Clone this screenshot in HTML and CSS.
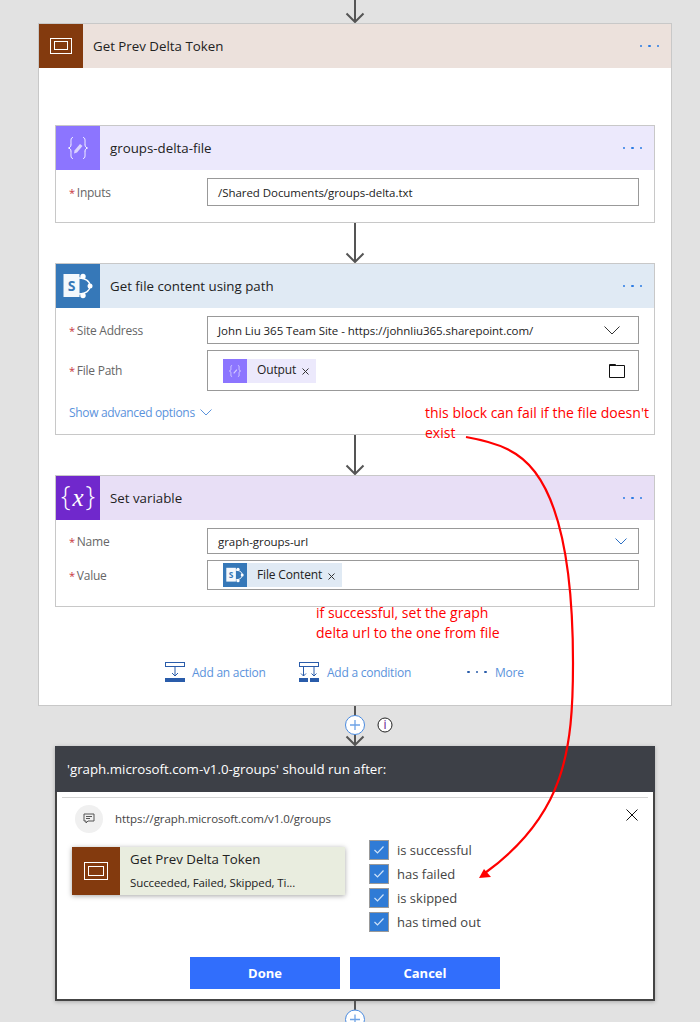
FILE: index.html
```html
<!DOCTYPE html>
<html lang="en">
<head>
<meta charset="utf-8">
<title>Get Prev Delta Token</title>
<link rel="stylesheet" href="styles.css">
</head>
<body>
<div class="page">
  <svg class="conn conn-top" width="24" height="23" viewBox="0 0 24 23"><path d="M12 0V21" class="ln"/><path d="M3.5 13.5L12 22L20.5 13.5" class="ln"/></svg>

  <section class="scope">
    <header class="head head-scope">
      <div class="ico ico-brown"><svg width="22" height="16" viewBox="0 0 22 16"><rect x=".5" y=".5" width="21" height="15" class="w"/><rect x="4.5" y="3.5" width="13" height="8" class="w"/></svg></div>
      <h2 class="title">Get Prev Delta Token</h2>
      <div class="dots"><i></i><i></i><i></i></div>
    </header>
    <div class="scope-body">
      <article class="card">
        <header class="head head-compose">
          <div class="ico ico-compose"><svg width="24" height="24" viewBox="0 0 24 24"><path d="M7 1.500C4.500 1.500 5 5 5 7.500S5 11 2.500 12C5 13 5 14 5 16.500S4.500 22.500 7 22.500M17 1.500C19.500 1.500 19 5 19 7.500S19 11 21.500 12C19 13 19 14 19 16.500S19.500 22.500 17 22.500" class="w"/><path d="M8.500 14.500L14 8L16.500 10L11 16.500L8 17.500Z" fill="#dcd4ff"/></svg></div>
          <h3 class="title">groups-delta-file</h3>
          <div class="dots"><i></i><i></i><i></i></div>
        </header>
        <div class="fields f-one">
          <div class="row"><label class="lab"><b>*</b>Inputs</label><div class="inp">/Shared Documents/groups-delta.txt</div></div>
        </div>
      </article>

      <svg class="conn conn-mid" width="24" height="40" viewBox="0 0 24 40"><path d="M12 0V39" class="ln"/><path d="M3.500 30.500L12 39L20.500 30.500" class="ln"/></svg>

      <article class="card">
        <header class="head head-sp">
          <div class="ico ico-sp"><svg width="30" height="26" viewBox="0 0 30 26"><path d="M16 5C22 5 27 8 27 13S22 21 16 21" fill="none" stroke="#fff" stroke-width="1.300"/><circle cx="20" cy="3.500" r="2.700" fill="#fff"/><circle cx="27" cy="13" r="2.500" fill="#fff"/><circle cx="20" cy="22.500" r="2.700" fill="#fff"/><rect x=".5" y="1" width="16" height="23" fill="#f4f8fc"/><text x="8.500" y="17.500" class="sp-s">S</text></svg></div>
          <h3 class="title">Get file content using path</h3>
          <div class="dots"><i></i><i></i><i></i></div>
        </header>
        <div class="fields f-two">
          <div class="row"><label class="lab"><b>*</b>Site Address</label><div class="inp inp-site"><span>John Liu 365 Team Site - https://johnliu365.sharepoint.com/</span><svg width="16" height="9" viewBox="0 0 16 9"><path d="M.5 .5L8 8L15.500 .5" fill="none" stroke="#333"/></svg></div></div>
          <div class="row"><label class="lab"><b>*</b>File Path</label><div class="inp inp-path">
            <span class="tok tok-compose"><span class="tok-ico"><svg width="14" height="14" viewBox="0 0 24 24"><path d="M7 2.500C4.500 2.500 5 5 5 7.500S5 11 2.500 12C5 13 5 14 5 16.500S4.500 21.500 7 21.500M17 2.500C19.500 2.500 19 5 19 7.500S19 11 21.500 12C19 13 19 14 19 16.500S19.500 21.500 17 21.500" class="w"/><path d="M9 15.500L14.500 9L16 10.300L10.500 16.500Z" fill="#d6ccff"/></svg></span><span class="tok-txt">Output</span><svg class="tok-x" width="7" height="7" viewBox="0 0 7 7"><path d="M.5 .5L6.500 6.500M6.500 .5L.5 6.500" stroke="#333" fill="none"/></svg></span>
            <svg class="folder" width="16" height="14" viewBox="0 0 16 14"><path d="M.5 13.500V.5H6.500L7.500 1.500H15.500V13.500ZM.5 1.500H7.500" fill="none" stroke="#111"/></svg>
          </div></div>
          <div class="adv">Show advanced options <svg width="12" height="7" viewBox="0 0 12 7"><path d="M.5 .5L6 6L11.500 .5" fill="none" stroke="#5b93dc"/></svg></div>
        </div>
      </article>

      <svg class="conn conn-mid" width="24" height="40" viewBox="0 0 24 40"><path d="M12 0V39" class="ln"/><path d="M3.500 30.500L12 39L20.500 30.500" class="ln"/></svg>

      <article class="card">
        <header class="head head-var">
          <div class="ico ico-var"><span class="var-g">{<em>x</em>}</span></div>
          <h3 class="title">Set variable</h3>
          <div class="dots"><i></i><i></i><i></i></div>
        </header>
        <div class="fields f-three">
          <div class="row"><label class="lab"><b>*</b>Name</label><div class="inp inp-site inp-name"><span>graph-groups-url</span><svg width="12" height="7" viewBox="0 0 12 7"><path d="M.5 .5L6 6L11.500 .5" fill="none" stroke="#2b6fc4"/></svg></div></div>
          <div class="row"><label class="lab"><b>*</b>Value</label><div class="inp inp-val">
            <span class="tok tok-sp"><span class="tok-ico"><svg width="18" height="16" viewBox="0 0 30 26"><path d="M16 5C22 5 27 8 27 13S22 21 16 21" fill="none" stroke="#fff" stroke-width="1.600"/><circle cx="20" cy="3.500" r="2.700" fill="#fff"/><circle cx="27" cy="13" r="2.500" fill="#fff"/><circle cx="20" cy="22.500" r="2.700" fill="#fff"/><rect x=".5" y="1" width="16" height="23" fill="#f4f8fc"/><text x="8.500" y="17.500" class="sp-s">S</text></svg></span><span class="tok-txt">File Content</span><svg class="tok-x" width="7" height="7" viewBox="0 0 7 7"><path d="M.5 .5L6.500 6.500M6.500 .5L.5 6.500" stroke="#333" fill="none"/></svg></span>
          </div></div>
        </div>
      </article>

      <div class="actions">
        <div class="act act-1"><svg width="20" height="20" viewBox="0 0 20 20"><rect x=".5" y=".5" width="19" height="4" fill="none" stroke="#2a5caa"/><path d="M10 5V14M7 11L10 14L13 11" fill="none" stroke="#2a5caa"/><rect y="16" width="20" height="4" fill="#2a5caa"/></svg><span>Add an action</span></div>
        <div class="act act-2"><svg width="20" height="20" viewBox="0 0 20 20"><rect x=".5" y=".5" width="19" height="4" fill="none" stroke="#2a5caa"/><path d="M4.500 5V14M2 11.500L4.500 14L7 11.500M15 5V14M12.500 11.500L15 14L17.500 11.500" fill="none" stroke="#2a5caa"/><rect y="16" width="9" height="4" fill="#2a5caa"/><rect x="11" y="16" width="9" height="4" fill="#2a5caa"/></svg><span>Add a condition</span></div>
        <div class="act act-3"><div class="dots dots-more"><i></i><i></i><i></i></div><span>More</span></div>
      </div>
    </div>
  </section>

  <svg class="conn conn-plus" width="80" height="40" viewBox="0 0 80 40"><path d="M40 0V39" class="ln"/><path d="M31.500 30.500L40 39L48.500 30.500" class="ln"/><circle cx="40" cy="19" r="9.500" fill="#fff" stroke="#4a8be0"/><path d="M35 19H45M40 14V24" stroke="#6ea3e6" stroke-width="1.300"/><circle cx="70" cy="19" r="7" fill="#fff" stroke="#222"/><text x="70" y="23" class="info">i</text></svg>

  <section class="dialog">
    <header class="dlg-head">'graph.microsoft.com-v1.0-groups' should run after:</header>
    <div class="dlg-body">
      <div class="dlg-url">
        <span class="bubble"><svg width="12" height="12" viewBox="0 0 12 12"><path d="M1 1H11V8H5L3 10V8H1Z" fill="none" stroke="#555"/><path d="M3 3.500H9M3 5.500H7" stroke="#555"/></svg></span>
        <span class="url">https://graph.microsoft.com/v1.0/groups</span>
        <svg class="close" width="12" height="12" viewBox="0 0 12 12"><path d="M.5 .5L11.500 11.500M11.500 .5L.5 11.500" stroke="#111" fill="none"/></svg>
      </div>
      <div class="dlg-main">
        <div class="task">
          <div class="task-ico"><svg width="24" height="18" viewBox="0 0 24 18"><rect x=".5" y=".5" width="23" height="17" class="w"/><rect x="4.500" y="4.500" width="15" height="9" class="w"/></svg></div>
          <div class="task-txt"><div class="task-t">Get Prev Delta Token</div><div class="task-s">Succeeded, Failed, Skipped, Ti...</div></div>
        </div>
        <ul class="checks">
          <li><span class="cb"><svg width="12" height="10" viewBox="0 0 12 10"><path d="M1.500 5L4.500 8L10.500 1.500" fill="none" stroke="#cfe3fa" stroke-width="1.200"/></svg></span>is successful</li>
          <li><span class="cb"><svg width="12" height="10" viewBox="0 0 12 10"><path d="M1.500 5L4.500 8L10.500 1.500" fill="none" stroke="#cfe3fa" stroke-width="1.200"/></svg></span>has failed</li>
          <li><span class="cb"><svg width="12" height="10" viewBox="0 0 12 10"><path d="M1.500 5L4.500 8L10.500 1.500" fill="none" stroke="#cfe3fa" stroke-width="1.200"/></svg></span>is skipped</li>
          <li><span class="cb"><svg width="12" height="10" viewBox="0 0 12 10"><path d="M1.500 5L4.500 8L10.500 1.500" fill="none" stroke="#cfe3fa" stroke-width="1.200"/></svg></span>has timed out</li>
        </ul>
      </div>
      <div class="btns"><button class="btn">Done</button><button class="btn">Cancel</button></div>
    </div>
  </section>

  <svg class="conn conn-end" width="24" height="21" viewBox="0 0 24 21"><path d="M12 0V10" class="ln"/><circle cx="12" cy="18.500" r="9.500" fill="#fff" stroke="#4a8be0"/><path d="M7 18.500H17M12 13.500V21" stroke="#6ea3e6" stroke-width="1.300"/></svg>

  <p class="note note-1">this block can fail if the file doesn't exist</p>
  <p class="note note-2">if successful, set the graph delta url to the one from file</p>
  <svg class="curve" width="700" height="1022" viewBox="0 0 700 1022"><path d="M466 437C500 443 520 452 535 472C560 505 573 570 573 663C573 750 565 815 485 873" fill="none" stroke="#f00" stroke-width="2.200"/><path d="M479 878L484 869L491 877Z" fill="#f00"/></svg>
</div>
</body>
</html>
```
FILE: styles.css
```css
* { box-sizing: border-box; }
html, body { margin: 0; padding: 0; }
body { background: #e2e2e2; font-family: "Open Sans", "Noto Sans", sans-serif; color: #222; }
.page { position: relative; width: 700px; height: 1022px; overflow: hidden; }
.conn { display: block; }
.conn-top { margin-left: 343px; }
.conn-mid { margin: 0 auto; }
.conn-plus { margin-left: 315px; }
.conn-end { margin-left: 343px; }
.ln { fill: none; stroke: #555; stroke-width: 2; }
.w { fill: none; stroke: #fff; stroke-width: 1; }

.scope { margin-left: 38px; width: 634px; height: 683px; background: #fff; border: 1px solid #c8c8c8; }
.scope-body { padding: 57px 16px 0; }
.head { display: flex; align-items: center; height: 44px; }
.head-scope { background: #ece1dc; }
.head-compose { background: #ece9fc; }
.head-sp { background: #e0eaf4; }
.head-var { background: #e8dff6; }
.ico { width: 44px; height: 44px; flex: none; display: flex; align-items: center; justify-content: center; }
.ico-brown { background: #833a0e; }
.ico-compose { background: #8c75ff; }
.ico-sp { background: #3678b8; }
.ico-var { background: #7028cc; }
.var-g { color: #fff; font: 300 27px/1 "Open Sans", sans-serif; white-space: nowrap; margin-top: -5px; }
.var-g em { font: italic 400 25px/1 "Liberation Serif", serif; margin: 0 2px; }
.title { flex: 1; margin: 0 0 0 10px; font-size: 13.300px; font-weight: 400; color: #222; }
.dots { display: flex; gap: 6px; margin-right: 12px; }
.dots i { width: 2.500px; height: 2.500px; border-radius: 50%; background: #2b7be4; }

.card { border: 1px solid #c8c8c8; background: #fff; }
.fields { padding: 8px 15px 0 13px; display: flex; flex-direction: column; gap: 6px; }
.f-one { height: 52px; }
.f-two { height: 126px; }
.f-three { height: 86px; }
.row { display: flex; align-items: center; }
.lab { width: 138px; flex: none; font-size: 12px; color: #666; letter-spacing: -.25px; }
.lab b { color: #c8343c; font-weight: 400; font-size: 11px; margin-right: 2px; }
.inp { flex: 1; height: 28px; border: 1px solid #999; display: flex; align-items: center; padding-left: 10px; font-size: 11.500px; color: #222; letter-spacing: -.05px; background: #fff; }
.inp-site { justify-content: space-between; padding-right: 18px; }
.inp-name { height: 26px; padding-right: 11px; }
.inp-path { height: 41px; padding: 0 13px 0 15px; justify-content: space-between; }
.inp-val { height: 30px; padding-left: 15px; align-items: center; }
.tok { display: inline-flex; align-items: center; height: 24px; font-size: 12px; padding-right: 7px; letter-spacing: -.15px; }
.tok-compose { background: #ece9fc; }
.tok-sp { background: #e0eaf4; }
.tok-ico { width: 24px; height: 24px; display: flex; align-items: center; justify-content: center; margin-right: 10px; }
.tok-compose .tok-ico { background: #8c75ff; }
.tok-sp .tok-ico { background: #3678b8; }
.tok-txt { margin-top: -2px; }
.tok-x { margin-left: 6px; margin-top: 2px; }
.sp-s { font: 700 14px "Open Sans", sans-serif; fill: #3678b8; text-anchor: middle; }
.adv { margin-top: 7px; font-size: 12px; color: #5b93dc; letter-spacing: -.33px; display: flex; align-items: center; gap: 5px; }
.actions { position: relative; display: flex; align-items: center; height: 20px; margin-top: 55px; margin-left: 110px; font-size: 12px; color: #5b93dc; }
.act { display: flex; align-items: center; gap: 7px; letter-spacing: -.25px; }
.act-1 { width: 134px; }
.act-2 { width: 168px; gap: 8px; }
.dots-more { margin-right: 1px; gap: 6px; width: 20px; }
.dots-more i { background: #2a5caa; }
.info { font: 12px "Open Sans", sans-serif; fill: #60108c; text-anchor: middle; }

.dialog { margin-left: 55px; width: 600px; height: 255px; background: #fff; border: 2px solid #444; border-top: 0; box-shadow: 0 1px 4px rgba(0,0,0,.25); }
.dlg-head { margin: 0 -2px; height: 46px; background: #3d4047; color: #fff; font-size: 13.300px; display: flex; align-items: center; padding-left: 12px; }
.dlg-body { margin: 5px 5px 0; border-top: 1px solid #d4d4d4; }
.dlg-url { display: flex; align-items: center; height: 42px; padding-left: 13px; }
.bubble { width: 28px; height: 28px; border-radius: 50%; background: #f0f0f0; display: flex; align-items: center; justify-content: center; }
.url { flex: 1; margin-left: 12px; margin-top: -1px; font-size: 11.500px; color: #444; letter-spacing: -.07px; }
.close { margin-right: 10px; margin-top: -9px; }
.dlg-main { display: flex; align-items: flex-start; padding-left: 10px; }
.task { width: 273px; height: 48px; margin-top: 7px; display: flex; background: #e9eddf; box-shadow: 0 1px 5px rgba(0,0,0,.35); }
.task-ico { width: 48px; flex: none; background: #833a0e; display: flex; align-items: center; justify-content: center; }
.task-txt { padding-left: 10px; }
.task-t { font-size: 13.300px; line-height: 24px; color: #222; }
.task-s { font-size: 11.500px; line-height: 24px; color: #222; letter-spacing: -.1px; }
.checks { list-style: none; margin: 0 0 0 24px; padding: 0; display: flex; flex-direction: column; gap: 4px; }
.checks li { display: flex; align-items: center; height: 20px; font-size: 13px; color: #444; }
.cb { width: 20px; height: 20px; margin-right: 8px; background: #2f7bd6; border: 1px solid #999; display: flex; align-items: center; justify-content: center; }
.btns { display: flex; gap: 10px; justify-content: center; margin-top: 25px; padding-right: 20px; }
.btn { width: 150px; height: 32px; border: 0; background: #316efc; color: #fff; font: 700 13px "Open Sans", sans-serif; }

.note { position: absolute; margin: 0; color: #f00; font-size: 14px; line-height: 20px; }
.note-1 { left: 425px; top: 403px; width: 235px; }
.note-2 { left: 316px; top: 603px; width: 195px; }
.curve { position: absolute; left: 0; top: 0; pointer-events: none; }
```
